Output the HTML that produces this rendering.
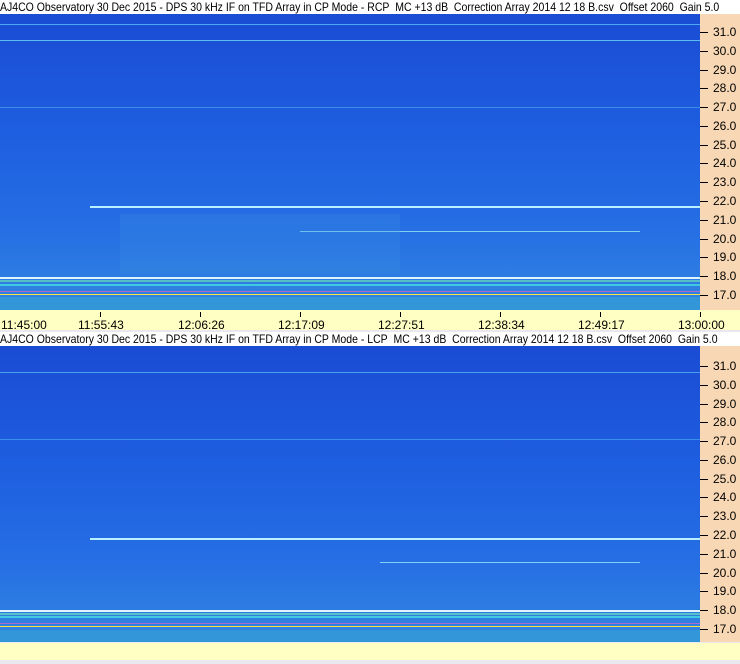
<!DOCTYPE html>
<html><head><style>
body{margin:0;width:740px;height:664px;overflow:hidden;background:#e8e8ee;font-family:"Liberation Sans",sans-serif;position:relative}
.t{position:absolute;left:0;width:740px;height:14px;background:#fff;font-size:12px;line-height:14px;white-space:nowrap;color:#000;overflow:hidden}
.t span{display:inline-block;transform:scaleX(0.875);transform-origin:0 0}
.ax{position:absolute;left:700px;width:40px;background:#f8d8b4}
.lab{position:absolute;left:713px;font-size:12px;line-height:12px}
.tk{position:absolute;left:700px;width:8px;height:1px;background:#000}
.yb{position:absolute;left:0;width:740px;background:#ffffc4}
.tl{position:absolute;top:318px;font-size:12px}
.vt{position:absolute;top:312px;width:1px;height:5px;background:#000}
</style></head><body>
<div class="t" style="top:0"><span>AJ4CO Observatory 30 Dec 2015 - DPS 30 kHz IF on TFD Array in CP Mode - RCP&nbsp; MC +13 dB&nbsp; Correction Array 2014 12 18 B.csv&nbsp; Offset 2060&nbsp; Gain 5.0</span></div>
<svg style="position:absolute;left:0;top:14px" width="700" height="296">
<defs><linearGradient id="g" x1="0" y1="0" x2="0" y2="1">
<stop offset="0" stop-color="#1a4cd4"/><stop offset="0.4" stop-color="#1e5ee0"/><stop offset="0.75" stop-color="#2670e4"/><stop offset="1" stop-color="#3286e0"/></linearGradient></defs>
<rect width="700" height="296" fill="url(#g)"/>
<rect y="10" width="700" height="1" fill="#4aa8f0"/><rect y="26" width="700" height="1" fill="#5ac0f0"/>
<rect y="93" width="700" height="1" fill="#3a90e8"/>
<rect x="90" y="192" width="610" height="2" fill="#b8f0ff"/>
<rect x="300" y="217" width="340" height="1" fill="#80d0f0"/>
<rect x="120" y="200" width="280" height="60" fill="#3a90e0" opacity="0.25"/>
<rect y="263" width="700" height="2" fill="#e0f4ff"/>
<rect y="266" width="700" height="2" fill="#60d0c0" opacity="0.8"/>
<rect y="270" width="700" height="2" fill="#40c8e0"/>
<rect y="277" width="700" height="1" fill="#ff60c0" opacity="0.6"/>
<rect y="280" width="700" height="1" fill="#ffe040"/>
<rect y="283" width="700" height="13" fill="#3296d8"/>
</svg>
<div class="ax" style="top:14px;height:296px"></div>
<div class="yb" style="top:310px;height:20px"></div>
<div class="vt" style="left:100px"></div><div class="vt" style="left:200px"></div><div class="vt" style="left:300px"></div><div class="vt" style="left:400px"></div><div class="vt" style="left:500px"></div><div class="vt" style="left:600px"></div><div class="vt" style="left:700px"></div>
<div class="tl" style="left:1px">11:45:00</div><div class="tl" style="left:78px">11:55:43</div><div class="tl" style="left:178px">12:06:26</div><div class="tl" style="left:278px">12:17:09</div><div class="tl" style="left:378px">12:27:51</div><div class="tl" style="left:478px">12:38:34</div><div class="tl" style="left:578px">12:49:17</div><div class="tl" style="left:678px">13:00:00</div>
<div class="t" style="top:332px"><span>AJ4CO Observatory 30 Dec 2015 - DPS 30 kHz IF on TFD Array in CP Mode - LCP&nbsp; MC +13 dB&nbsp; Correction Array 2014 12 18 B.csv&nbsp; Offset 2060&nbsp; Gain 5.0</span></div>
<svg style="position:absolute;left:0;top:346px" width="700" height="296">
<rect width="700" height="296" fill="url(#g)"/>
<rect y="26" width="700" height="1" fill="#4aa0f0"/><rect y="93" width="700" height="1" fill="#3a90e8"/>
<rect x="90" y="192" width="610" height="2" fill="#b8f0ff"/>
<rect x="380" y="216" width="260" height="1" fill="#80d0f0"/>
<rect y="264" width="700" height="2" fill="#e0f4ff"/>
<rect y="267" width="700" height="2" fill="#60d0c0" opacity="0.8"/>
<rect y="270" width="700" height="2" fill="#40c8e0"/>
<rect y="277" width="700" height="1" fill="#ff60c0" opacity="0.6"/>
<rect y="280" width="700" height="1" fill="#ffe040"/>
<rect y="284" width="700" height="12" fill="#3296d8"/>
</svg>
<div class="ax" style="top:346px;height:296px"></div>
<div class="yb" style="top:643px;height:17px"></div>
<div class="lab" style="top:26px">31.0</div><div class="lab" style="top:45px">30.0</div><div class="lab" style="top:64px">29.0</div><div class="lab" style="top:82px">28.0</div><div class="lab" style="top:101px">27.0</div><div class="lab" style="top:120px">26.0</div><div class="lab" style="top:139px">25.0</div><div class="lab" style="top:157px">24.0</div><div class="lab" style="top:176px">23.0</div><div class="lab" style="top:195px">22.0</div><div class="lab" style="top:214px">21.0</div><div class="lab" style="top:233px">20.0</div><div class="lab" style="top:251px">19.0</div><div class="lab" style="top:270px">18.0</div><div class="lab" style="top:289px">17.0</div>
<div class="tk" style="top:32px"></div><div class="tk" style="top:51px"></div><div class="tk" style="top:70px"></div><div class="tk" style="top:88px"></div><div class="tk" style="top:107px"></div><div class="tk" style="top:126px"></div><div class="tk" style="top:145px"></div><div class="tk" style="top:163px"></div><div class="tk" style="top:182px"></div><div class="tk" style="top:201px"></div><div class="tk" style="top:220px"></div><div class="tk" style="top:239px"></div><div class="tk" style="top:257px"></div><div class="tk" style="top:276px"></div><div class="tk" style="top:295px"></div>
<div class="lab" style="top:360px">31.0</div><div class="lab" style="top:379px">30.0</div><div class="lab" style="top:398px">29.0</div><div class="lab" style="top:416px">28.0</div><div class="lab" style="top:435px">27.0</div><div class="lab" style="top:454px">26.0</div><div class="lab" style="top:473px">25.0</div><div class="lab" style="top:491px">24.0</div><div class="lab" style="top:510px">23.0</div><div class="lab" style="top:529px">22.0</div><div class="lab" style="top:548px">21.0</div><div class="lab" style="top:567px">20.0</div><div class="lab" style="top:585px">19.0</div><div class="lab" style="top:604px">18.0</div><div class="lab" style="top:623px">17.0</div>
<div class="tk" style="top:366px"></div><div class="tk" style="top:385px"></div><div class="tk" style="top:404px"></div><div class="tk" style="top:422px"></div><div class="tk" style="top:441px"></div><div class="tk" style="top:460px"></div><div class="tk" style="top:479px"></div><div class="tk" style="top:497px"></div><div class="tk" style="top:516px"></div><div class="tk" style="top:535px"></div><div class="tk" style="top:554px"></div><div class="tk" style="top:573px"></div><div class="tk" style="top:591px"></div><div class="tk" style="top:610px"></div><div class="tk" style="top:629px"></div>
</body></html>
